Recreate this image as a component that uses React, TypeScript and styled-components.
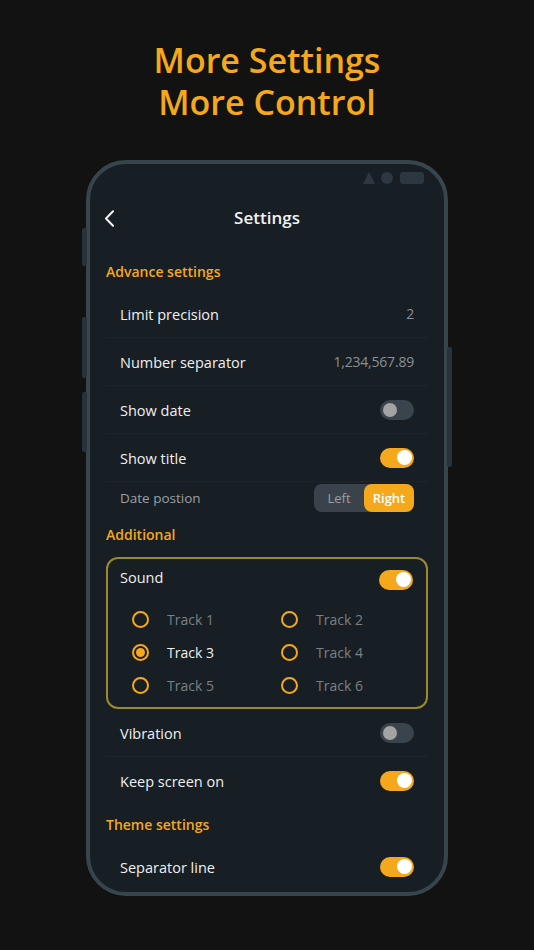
import React, { useState } from "react";
import styled, { createGlobalStyle } from "styled-components";

const ORANGE = "#f5a81b";
const FONT = `"Open Sans", "Noto Sans", "Liberation Sans", sans-serif`;

const Global = createGlobalStyle`
  html, body { margin: 0; padding: 0; background: #121212; }
  body { font-family: ${FONT}; }
  * { box-sizing: border-box; }
`;

const Page = styled.div`
  width: 534px;
  height: 950px;
  background: #121212;
  display: flex;
  flex-direction: column;
  align-items: center;
  overflow: hidden;
`;

const Headline = styled.h1`
  margin: 39px 0 0;
  font-family: ${FONT};
  font-size: 34px;
  line-height: 42px;
  font-weight: 600;
  color: ${ORANGE};
  text-align: center;
`;

const PhoneWrap = styled.div`
  position: relative;
  margin-top: 37px;
  width: 362px;
  height: 736px;
`;

const Phone = styled.div`
  width: 100%;
  height: 100%;
  border: 4px solid #37454d;
  border-radius: 40px;
  background: #171e24;
  overflow: hidden;
  display: flex;
  flex-direction: column;
`;

const SideButton = styled.div<{ $side: "left" | "right"; $top: number; $h: number }>`
  position: absolute;
  ${(p) => (p.$side === "left" ? "left: -4px;" : "right: -4px;")}
  top: ${(p) => p.$top}px;
  height: ${(p) => p.$h}px;
  width: 5px;
  border-radius: 2px;
  background: #27323a;
`;

const StatusBar = styled.div`
  height: 28px;
  flex-shrink: 0;
  display: flex;
  align-items: center;
  justify-content: flex-end;
  gap: 6px;
  padding-right: 20px;
`;

const StatusRect = styled.div`
  width: 24px;
  height: 12px;
  border-radius: 3px;
  background: #2d373f;
  margin-left: 1px;
`;

const Header = styled.div`
  position: relative;
  height: 50px;
  flex-shrink: 0;
  display: flex;
  align-items: center;
  justify-content: center;
`;

const BackButton = styled.div`
  position: absolute;
  left: 14px;
  top: 17px;
  width: 16px;
  height: 18px;
  display: flex;
  align-items: center;
`;

const Title = styled.div`
  font-size: 17px;
  font-weight: 600;
  color: #f2f2f2;
  margin-top: 1px;
`;

const Content = styled.div`
  padding: 10px 16px 0;
  display: flex;
  flex-direction: column;
`;

const SectionTitle = styled.div<{ $h?: number }>`
  height: ${(p) => p.$h ?? 38}px;
  display: flex;
  align-items: center;
  font-size: 14px;
  font-weight: 600;
  color: ${ORANGE};
`;

const Row = styled.div<{ $sep?: boolean; $h?: number }>`
  height: ${(p) => p.$h ?? 48}px;
  display: flex;
  align-items: center;
  justify-content: space-between;
  padding: 0 14px;
  border-bottom: 1px solid ${(p) => (p.$sep ? "#1d252b" : "transparent")};
`;

const Label = styled.span<{ $muted?: boolean }>`
  font-size: ${(p) => (p.$muted ? 13.5 : 14.5)}px;
  color: ${(p) => (p.$muted ? "#9aa0a5" : "#f0f0f0")};
  margin-top: 1px;
`;

const Value = styled.span`
  font-size: 14px;
  color: #8b9095;
  letter-spacing: -0.2px;
`;

const Track = styled.div<{ $on: boolean }>`
  width: 34px;
  height: 20px;
  border-radius: 10px;
  background: ${(p) => (p.$on ? ORANGE : "#3a444c")};
  display: flex;
  align-items: center;
  justify-content: ${(p) => (p.$on ? "flex-end" : "flex-start")};
  padding: 0 ${(p) => (p.$on ? 2.5 : 3)}px;
`;

const Knob = styled.div<{ $on: boolean }>`
  width: ${(p) => (p.$on ? 15 : 14)}px;
  height: ${(p) => (p.$on ? 15 : 14)}px;
  border-radius: 50%;
  background: ${(p) => (p.$on ? "#ffffff" : "#a3a3a3")};
`;

const Toggle = ({ on }: { on: boolean }) => (
  <Track $on={on}>
    <Knob $on={on} />
  </Track>
);

const Segmented = styled.div`
  display: flex;
  width: 100px;
  height: 28px;
  border-radius: 8px;
  background: #3a434b;
`;

const Segment = styled.div<{ $active: boolean }>`
  flex: 1;
  display: flex;
  align-items: center;
  justify-content: center;
  border-radius: 8px;
  font-size: 13px;
  font-weight: ${(p) => (p.$active ? 600 : 400)};
  color: ${(p) => (p.$active ? "#ffffff" : "#9aa0a5")};
  background: ${(p) => (p.$active ? ORANGE : "transparent")};
`;

const SoundBox = styled.div`
  margin-top: 2px;
  height: 152px;
  border: 2px solid #9a8a2d;
  border-radius: 12px;
  padding: 0 13px 0 12px;
  display: flex;
  flex-direction: column;
`;

const SoundHead = styled.div`
  height: 40px;
  display: flex;
  align-items: center;
  justify-content: space-between;
  padding-top: 1px;
`;

const SoundLabel = styled.span`
  font-size: 14.5px;
  color: #f0f0f0;
  margin-top: -5px;
`;

const RadioGrid = styled.div`
  display: grid;
  grid-template-columns: 149px 1fr;
  grid-auto-rows: 33px;
  padding-left: 12px;
  margin-top: 4px;
`;

const RadioItem = styled.div`
  display: flex;
  align-items: center;
  gap: 18px;
`;

const RadioCircle = styled.div<{ $checked: boolean }>`
  width: 17px;
  height: 17px;
  flex-shrink: 0;
  border-radius: 50%;
  border: 2px solid ${ORANGE};
  display: flex;
  align-items: center;
  justify-content: center;
  &::after {
    content: "";
    width: 9px;
    height: 9px;
    border-radius: 50%;
    background: ${(p) => (p.$checked ? ORANGE : "transparent")};
  }
`;

const RadioText = styled.span<{ $checked: boolean }>`
  font-size: 14px;
  color: ${(p) => (p.$checked ? "#f0f0f0" : "#7b8085")};
`;

const tracks = ["Track 1", "Track 2", "Track 3", "Track 4", "Track 5", "Track 6"];

export default function App() {
  const [selected] = useState("Track 3");
  return (
    <Page>
      <Global />
      <Headline>
        More Settings
        <br />
        More Control
      </Headline>
      <PhoneWrap>
        <SideButton $side="left" $top={68} $h={38} />
        <SideButton $side="left" $top={157} $h={61} />
        <SideButton $side="left" $top={232} $h={60} />
        <SideButton $side="right" $top={187} $h={120} />
        <Phone>
          <StatusBar>
            <svg width="12" height="12" viewBox="0 0 12 12">
              <polygon points="6,0 12,12 0,12" fill="#2d373f" />
            </svg>
            <svg width="12" height="12" viewBox="0 0 12 12">
              <circle cx="6" cy="6" r="6" fill="#2d373f" />
            </svg>
            <StatusRect />
          </StatusBar>
          <Header>
            <BackButton>
              <svg width="11" height="17" viewBox="0 0 11 17" fill="none">
                <path d="M9 1.2 L2 8.5 L9 15.8" stroke="#f2f2f2" strokeWidth="2" strokeLinecap="round" strokeLinejoin="round" />
              </svg>
            </BackButton>
            <Title>Settings</Title>
          </Header>
          <Content>
            <SectionTitle>Advance settings</SectionTitle>
            <Row $sep>
              <Label>Limit precision</Label>
              <Value>2</Value>
            </Row>
            <Row $sep>
              <Label>Number separator</Label>
              <Value>1,234,567.89</Value>
            </Row>
            <Row $sep>
              <Label>Show date</Label>
              <Toggle on={false} />
            </Row>
            <Row $sep>
              <Label>Show title</Label>
              <Toggle on />
            </Row>
            <Row $h={32}>
              <Label $muted>Date postion</Label>
              <Segmented>
                <Segment $active={false}>Left</Segment>
                <Segment $active>Right</Segment>
              </Segmented>
            </Row>
            <SectionTitle $h={41}>Additional</SectionTitle>
            <SoundBox>
              <SoundHead>
                <SoundLabel>Sound</SoundLabel>
                <Toggle on />
              </SoundHead>
              <RadioGrid>
                {tracks.map((t) => (
                  <RadioItem key={t}>
                    <RadioCircle $checked={t === selected} />
                    <RadioText $checked={t === selected}>{t}</RadioText>
                  </RadioItem>
                ))}
              </RadioGrid>
            </SoundBox>
            <Row $sep>
              <Label>Vibration</Label>
              <Toggle on={false} />
            </Row>
            <Row>
              <Label>Keep screen on</Label>
              <Toggle on />
            </Row>
            <SectionTitle>Theme settings</SectionTitle>
            <Row>
              <Label>Separator line</Label>
              <Toggle on />
            </Row>
          </Content>
        </Phone>
      </PhoneWrap>
    </Page>
  );
}
